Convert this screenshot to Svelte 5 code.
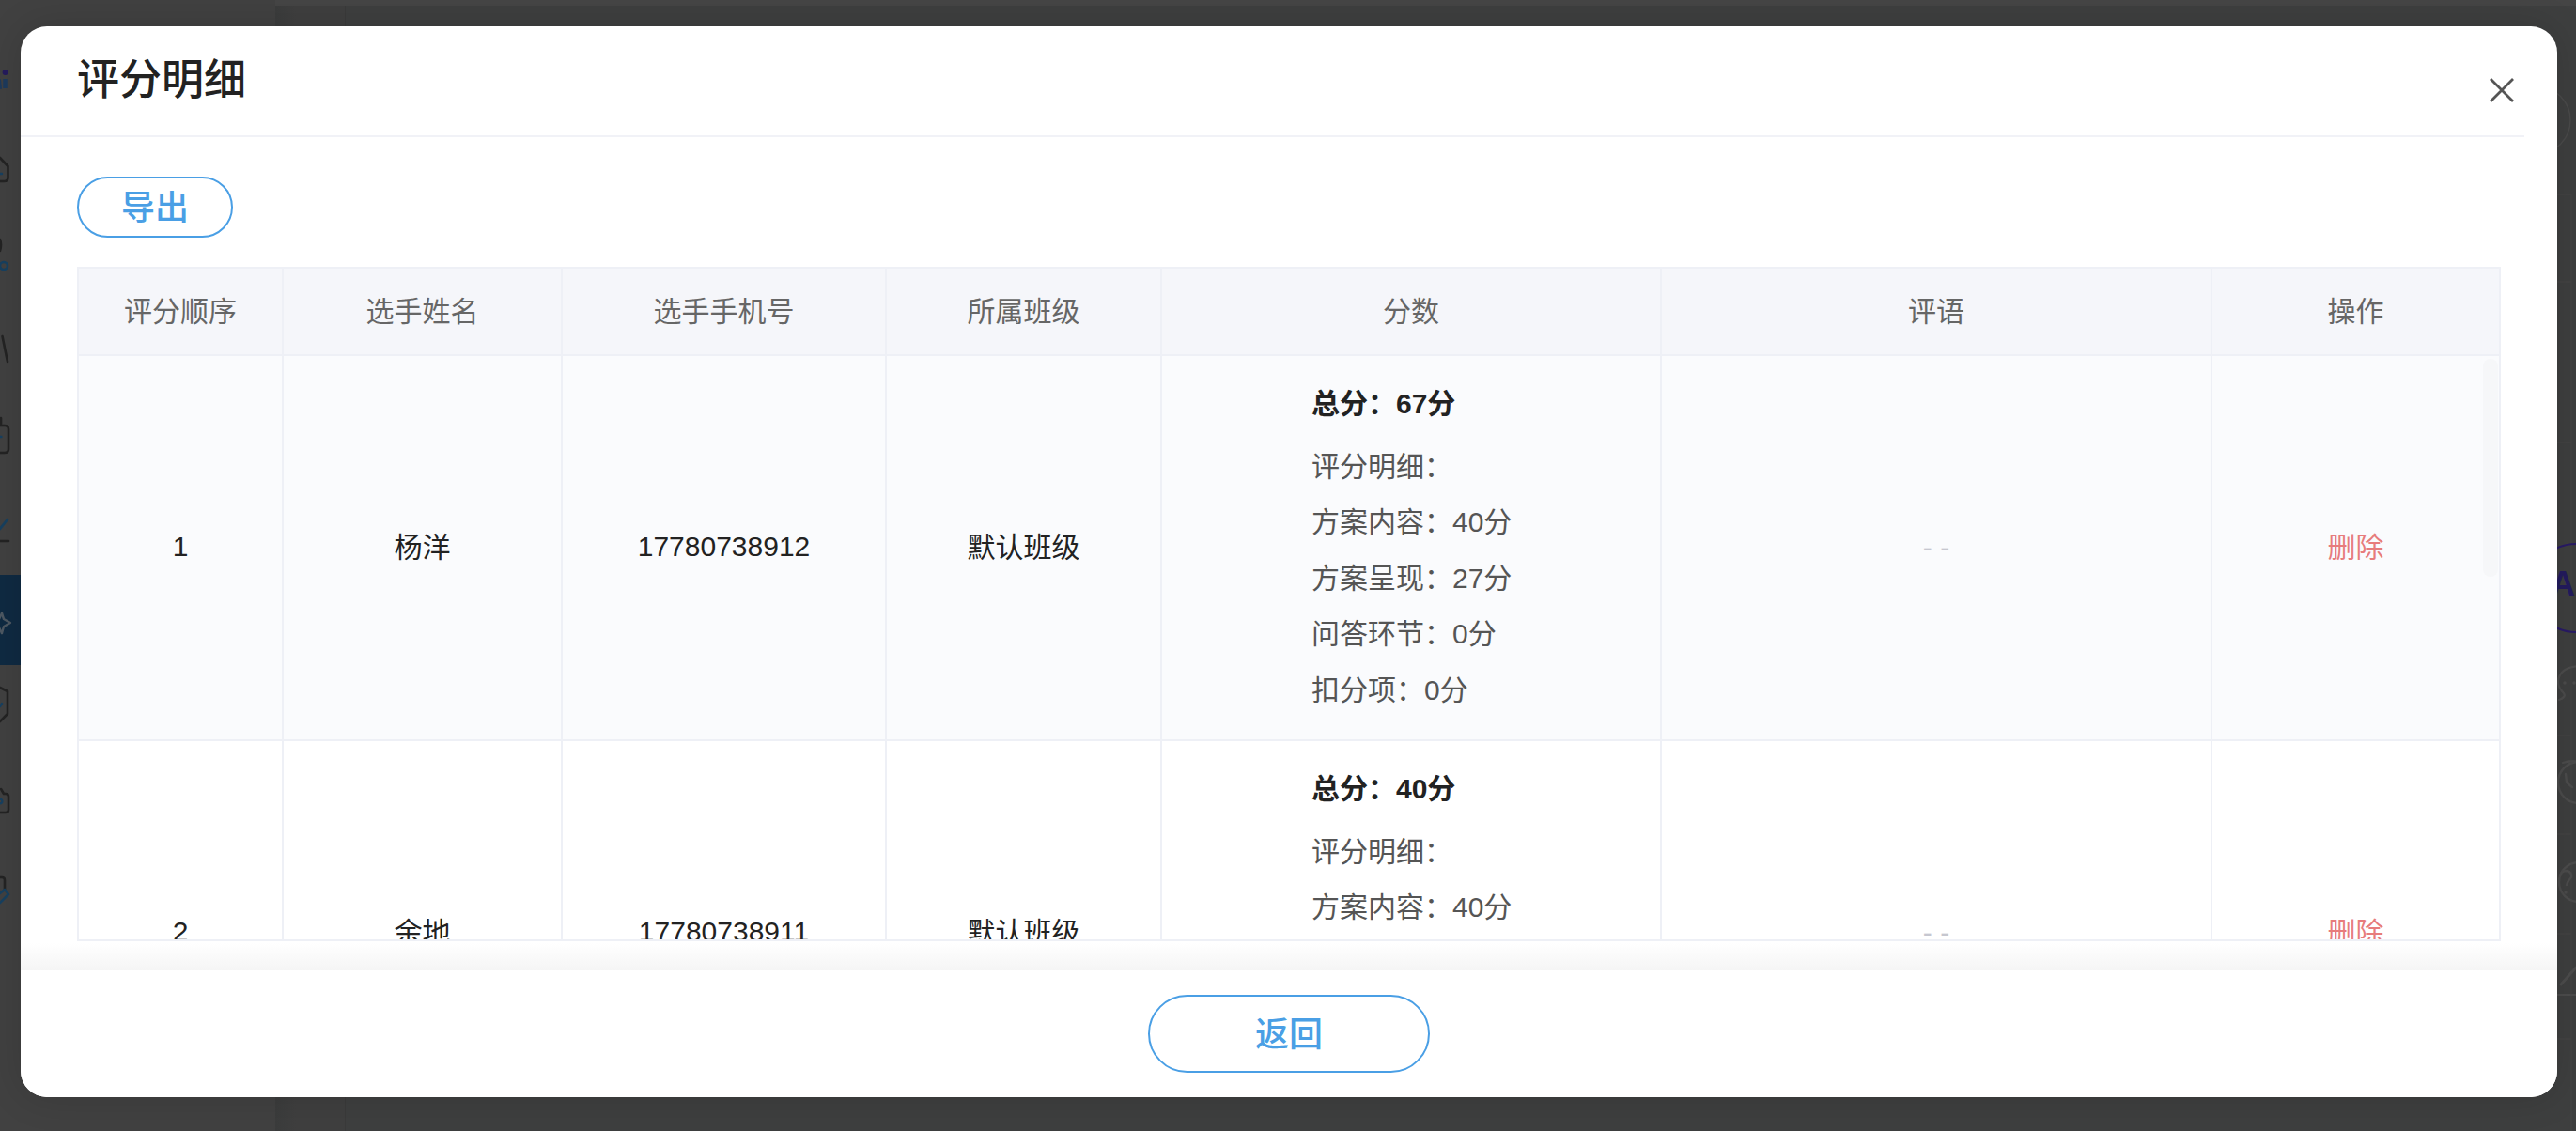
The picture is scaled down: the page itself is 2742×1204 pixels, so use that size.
<script lang="ts">
  type Row = { no: number; name: string; phone: string; cls: string; total: number; items: [string, number][] };

  const columns = [218, 297, 345, 293, 532, 586, 307];
  const headers = ["评分顺序", "选手姓名", "选手手机号", "所属班级", "分数", "评语", "操作"];

  const rows: Row[] = [
    {
      no: 1, name: "杨洋", phone: "17780738912", cls: "默认班级", total: 67,
      items: [["方案内容", 40], ["方案呈现", 27], ["问答环节", 0], ["扣分项", 0]]
    },
    {
      no: 2, name: "余地", phone: "17780738911", cls: "默认班级", total: 40,
      items: [["方案内容", 40], ["方案呈现", 0], ["问答环节", 0], ["扣分项", 0]]
    }
  ];
</script>

<div class="page">
  <div class="backdrop">
    <aside class="sidebar">
      <div class="nav-active"></div>
      <svg class="nav-icons" width="40" height="1204" viewBox="0 0 40 1204" fill="none" stroke-linecap="round" stroke-linejoin="round">
        <!-- logo tail -->
        <circle cx="5.6" cy="77" r="3" fill="#241a5c" />
        <path d="M5.5 84v10" stroke="#1d3a5c" stroke-width="4.5" stroke-linecap="butt" />
        <path d="M0 85l1 9" stroke="#1d3a5c" stroke-width="2" />
        <!-- home -->
        <path d="M0 168l8.5 9v12q0 4-4 4H0" stroke="#232323" stroke-width="2.6" />
        <path d="M0 185h2" stroke="#17405f" stroke-width="2.4" />
        <!-- share -->
        <path d="M0 255q2 5 0 12" stroke="#232323" stroke-width="2.6" />
        <circle cx="4" cy="283" r="4" stroke="#17405f" stroke-width="2.6" />
        <!-- slash -->
        <path d="M2.5 358l5.5 27" stroke="#232323" stroke-width="2.6" />
        <!-- box -->
        <path d="M1 445v8M0 453h5q4 0 4 4v21q0 4-4 4H0" stroke="#232323" stroke-width="2.6" />
        <path d="M0 465h1.5" stroke="#17405f" stroke-width="2.4" />
        <!-- chart -->
        <path d="M0 563l8-10" stroke="#17405f" stroke-width="2.8" />
        <path d="M0 576h9" stroke="#232323" stroke-width="2.6" />
        <!-- star, active item -->
        <path d="M2 653l2 6 7 4-7 4-2 7" stroke="#4d5862" stroke-width="2.4" />
        <path d="M2 653l-3 6M2 674l-3-6" stroke="#4d5862" stroke-width="2.4" />
        <!-- shield -->
        <path d="M0 732l8 4v24l-8 8" stroke="#232323" stroke-width="2.6" />
        <path d="M0 752l2-3" stroke="#17405f" stroke-width="2.4" />
        <!-- camera -->
        <path d="M1 840l3 5h2q3 0 3 3v14q0 3-3 3H0" stroke="#232323" stroke-width="2.6" />
        <circle cx="0" cy="853" r="2.4" stroke="#17405f" stroke-width="2.2" />
        <!-- pen -->
        <path d="M0 934h2q3 0 3 3v10" stroke="#232323" stroke-width="2.6" />
        <path d="M0 961l9-9-4-5-5 4" stroke="#17405f" stroke-width="2.6" />
      </svg>
    </aside>
    <div class="subnav"></div>
    <main class="content"></main>
    <svg class="tools" width="42" height="1204" viewBox="2700 0 42 1204" fill="none" stroke-linecap="round">
      <circle cx="2700" cy="128" r="36" stroke="#4a4a4a" stroke-width="1.5" />
      <path d="M2722 207h15v997M2722 300h15M2722 471h15M2722 783h15M2722 888h15M2722 994h15M2722 1106h15" stroke="#474747" stroke-width="1" stroke-linecap="butt" />
      <circle cx="2742" cy="626" r="47" stroke="#281a66" stroke-width="2.2" />
      <!-- chat -->
      <path d="M2724 745q8-3 5-7-6-6-6-12 1-16 23-17" stroke="#4c4c4c" stroke-width="2.2" />
      <circle cx="2730" cy="727" r="1.8" fill="#4c4c4c" />
      <circle cx="2740" cy="727" r="1.8" fill="#4c4c4c" />
      <!-- clock -->
      <circle cx="2745" cy="833" r="22" stroke="#4c4c4c" stroke-width="2.4" />
      <path d="M2728 812q8-3 16-1M2731 824l1 9 6 5" stroke="#4c4c4c" stroke-width="2.4" />
      <!-- help -->
      <circle cx="2745" cy="939" r="21" stroke="#4c4c4c" stroke-width="2.4" />
      <path d="M2725 933q1-6 7-6 6 1 5 7-4 4-5 8" stroke="#4c4c4c" stroke-width="2.4" />
      <circle cx="2731" cy="950" r="1.7" fill="#4c4c4c" />
      <!-- edit -->
      <path d="M2726 1048l16-18" stroke="#4c4c4c" stroke-width="3" />
      <path d="M2722 1059h20" stroke="#4c4c4c" stroke-width="2.2" />
    </svg>
    <span class="badge-text">A</span>
  </div>

  <section class="modal">
    <header class="modal-head">
      <h2>评分明细</h2>
    </header>
    <button class="close" aria-label="关闭">
      <svg width="26" height="26" viewBox="0 0 26 26" fill="none" stroke="#555" stroke-width="2.8">
        <path d="M1 1l24 24M25 1L1 25" />
      </svg>
    </button>

    <div class="modal-body">
      <button class="btn export">导出</button>
      <div class="table-wrap">
        <table>
          <colgroup>
            {#each columns as w}
              <col style="width: {w}px" />
            {/each}
          </colgroup>
          <thead>
            <tr>
              {#each headers as h}
                <th>{h}</th>
              {/each}
            </tr>
          </thead>
          <tbody>
            {#each rows as row}
              <tr>
                <td class="num">{row.no}</td>
                <td class="cjk">{row.name}</td>
                <td class="num">{row.phone}</td>
                <td class="cjk">{row.cls}</td>
                <td class="score">
                  <div class="total">总分：{row.total}分</div>
                  <div>评分明细：</div>
                  {#each row.items as [label, value]}
                    <div>{label}：{value}分</div>
                  {/each}
                </td>
                <td class="empty">- -</td>
                <td class="cjk danger">删除</td>
              </tr>
            {/each}
          </tbody>
        </table>
        <div class="thumb"></div>
      </div>
    </div>

    <div class="fade"></div>
    <footer class="modal-foot">
      <button class="btn back">返回</button>
    </footer>
  </section>
</div>

<style>
  :global(body) {
    margin: 0;
    background: #404040;
    overflow: hidden;
  }

  .page {
    position: relative;
    width: 2742px;
    height: 1204px;
    overflow: hidden;
    font-family: "Liberation Sans", "Noto Sans CJK SC", sans-serif;
  }

  .backdrop {
    position: absolute;
    inset: 0;
    display: flex;
    background: #454545;
  }
  .sidebar {
    position: relative;
    width: 293px;
    background: #414141;
  }
  .nav-active {
    position: absolute;
    left: 0;
    top: 612px;
    width: 293px;
    height: 96px;
    background: #0f2a42;
  }
  .nav-icons {
    position: absolute;
    left: 0;
    top: 0;
  }
  .subnav {
    width: 75px;
    background: linear-gradient(90deg, #3b3c3c, #3f3f3f 30%);
    border-right: 1px solid #3a3a3a;
    box-sizing: border-box;
    margin-top: 6px;
  }
  .content {
    flex: 1;
    background: #3e3f3f;
    margin-top: 6px;
  }
  .tools {
    position: absolute;
    right: 0;
    top: 0;
  }
  .badge-text {
    position: absolute;
    left: 2715px;
    top: 599px;
    font-size: 36px;
    line-height: 46px;
    font-weight: 700;
    color: #231b5e;
  }

  .modal {
    position: absolute;
    left: 22px;
    top: 28px;
    width: 2700px;
    height: 1140px;
    display: flex;
    flex-direction: column;
    background: #fff;
    border-radius: 28px;
    box-shadow: 0 0 40px rgba(0, 0, 0, 0.14);
    overflow: hidden;
  }

  .modal-head {
    flex: none;
    height: 116px;
    margin-right: 35px;
    padding-left: 60px;
    border-bottom: 2px solid #f1f2f7;
  }
  .modal-head h2 {
    margin: 0;
    padding-top: 29px;
    font-size: 45px;
    line-height: 58px;
    font-weight: 500;
    color: #222;
  }

  .close {
    position: absolute;
    left: 2628px;
    top: 55px;
    width: 26px;
    height: 26px;
    padding: 0;
    border: 0;
    background: none;
    line-height: 0;
  }

  .modal-body {
    flex: none;
    height: 816px;
    padding: 42px 60px 0;
    display: flex;
    flex-direction: column;
    align-items: flex-start;
    gap: 31px;
  }

  .btn {
    box-sizing: border-box;
    padding: 2px 0 0;
    background: #fff;
    border: 2px solid #4a9fe5;
    border-radius: 999px;
    color: #4a9fe5;
    font-family: inherit;
    font-size: 36px;
    font-weight: 500;
    line-height: 1;
  }
  .export {
    width: 166px;
    height: 65px;
  }
  .back {
    width: 300px;
    height: 83px;
  }

  .table-wrap {
    position: relative;
    width: 2580px;
    height: 718px;
    box-sizing: border-box;
    overflow: hidden;
    border: 2px solid #eef0f6;
    border-right: 0;
  }
  table {
    width: 2578px;
    table-layout: fixed;
    border-collapse: separate;
    border-spacing: 0;
    font-size: 30px;
  }
  th, td {
    box-sizing: border-box;
    border-right: 2px solid #eef0f6;
    border-bottom: 2px solid #eef0f6;
    padding: 0;
    text-align: center;
    vertical-align: middle;
  }
  th {
    height: 93px;
    padding-bottom: 6px;
    background: #f5f6fa;
    color: #666;
    font-weight: 400;
  }
  td {
    height: 410px;
    color: #222;
  }
  tbody tr:nth-child(odd) td {
    background: #fafbfd;
  }
  td.cjk {
    padding-bottom: 6px;
  }
  td.num {
    padding-bottom: 2px;
  }
  td.score {
    padding: 21px 0 0 159px;
    vertical-align: top;
    text-align: left;
    color: #555;
    line-height: 59.5px;
  }
  .total {
    margin-bottom: 7px;
    font-weight: 700;
    color: #222;
  }
  .empty {
    color: #c6c7d0;
  }
  td.danger {
    color: #e77c7c;
  }
  .thumb {
    position: absolute;
    right: 3px;
    top: 96px;
    width: 16px;
    height: 232px;
    border-radius: 8px;
    background: #f6f7f9;
  }

  .fade {
    flex: none;
    height: 29px;
    background: linear-gradient(180deg, #fff, #f5f5f5);
  }

  .modal-foot {
    flex: none;
    height: 135px;
    box-sizing: border-box;
    padding-top: 26px;
    display: flex;
    justify-content: center;
    background: #fff;
  }
</style>
